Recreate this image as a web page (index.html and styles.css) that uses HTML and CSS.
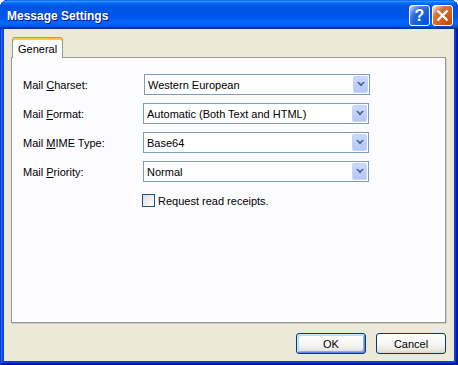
FILE: index.html
```html
<!DOCTYPE html>
<html lang="en">
<head>
    <meta charset="UTF-8">
    <title>Message Settings</title>
    <link rel="stylesheet" href="styles.css">
</head>
<body>
    <div class="window">
        <div class="titlebar">
            <span class="title">Message Settings</span>
            <div class="title-controls">
                <div class="ctl ctl-help">?</div>
                <div class="ctl ctl-close">
                    <svg width="19" height="19" viewBox="0 0 19 19">
                        <path d="M4.5 4.5 L14.5 14.5 M14.5 4.5 L4.5 14.5" stroke="#fff" stroke-width="2.4" fill="none"/>
                    </svg>
                </div>
            </div>
        </div>

        <div class="client">
            <div class="tabs">
                <div class="tab active">General</div>
            </div>

            <div class="panel">
                <div class="form">
                    <span class="label">Mail <u>C</u>harset:</span>
                    <div class="combo combo-shift">
                        <span>Western European</span>
                        <span class="combo-arrow"><svg width="8" height="5" viewBox="0 0 8 5"><polygon points="0,0 2,0 4,2 6,0 8,0 4,4.5" fill="#4d6185"/></svg></span>
                    </div>

                    <span class="label">Mail <u>F</u>ormat:</span>
                    <div class="combo">
                        <span>Automatic (Both Text and HTML)</span>
                        <span class="combo-arrow"><svg width="8" height="5" viewBox="0 0 8 5"><polygon points="0,0 2,0 4,2 6,0 8,0 4,4.5" fill="#4d6185"/></svg></span>
                    </div>

                    <span class="label">Mail <u>M</u>IME Type:</span>
                    <div class="combo">
                        <span>Base64</span>
                        <span class="combo-arrow"><svg width="8" height="5" viewBox="0 0 8 5"><polygon points="0,0 2,0 4,2 6,0 8,0 4,4.5" fill="#4d6185"/></svg></span>
                    </div>

                    <span class="label">Mail <u>P</u>riority:</span>
                    <div class="combo">
                        <span>Normal</span>
                        <span class="combo-arrow"><svg width="8" height="5" viewBox="0 0 8 5"><polygon points="0,0 2,0 4,2 6,0 8,0 4,4.5" fill="#4d6185"/></svg></span>
                    </div>
                </div>

                <label class="check">
                    <span class="box"></span>
                    <span>Request read receipts.</span>
                </label>
            </div>

            <div class="actions">
                <button class="btn btn-default">OK</button>
                <button class="btn">Cancel</button>
            </div>
        </div>
    </div>
</body>
</html>
```

FILE: styles.css
```css
* {
    margin: 0;
    padding: 0;
    box-sizing: border-box;
}

body {
    background: #fff;
    font-family: "Liberation Sans", Arial, sans-serif;
    font-size: 11px;
    color: #000;
}

.window {
    width: 458px;
    height: 365px;
    display: flex;
    flex-direction: column;
    background: #0842dc;
    border-radius: 8px 8px 0 0;
    overflow: hidden;
    box-shadow: inset -1px -1px #00138c, inset 1px 1px #0831d9,
                inset -2px -2px #001ea0, inset 2px 2px #166aee,
                inset -3px -3px #003bda, inset 3px 3px #0855dd;
}

/* title bar */
.titlebar {
    height: 29px;
    display: flex;
    align-items: center;
    padding: 0 5px 0 7px;
    border-radius: 8px 8px 0 0;
    background: linear-gradient(180deg, #0058ee 0%, #3593ff 4%, #288eff 6%, #127dff 8%,
        #036ffc 10%, #0262ee 14%, #0057e5 20%, #0054e3 24%, #0055eb 56%, #005bf5 66%,
        #026afe 76%, #0062ef 86%, #0052d6 92%, #0040ab 94%, #003092 100%);
}

.title {
    flex: 1;
    color: #fff;
    font-weight: bold;
    font-size: 12px;
    padding-top: 3px;
    text-shadow: 1px 1px #0f1089;
}

.title-controls {
    display: flex;
    gap: 2px;
    margin-top: 2px;
}

.ctl {
    width: 21px;
    height: 21px;
    border: 1px solid #fff;
    border-radius: 3px;
    display: flex;
    align-items: center;
    justify-content: center;
    color: #fff;
    font-weight: bold;
    font-size: 16px;
}

.ctl-help {
    background: radial-gradient(circle at 90% 90%, #0054e9 0%, #2263d5 55%, #4479e4 70%, #a3bbec 90%, #fff 100%);
}

.ctl-close {
    background: radial-gradient(circle at 90% 90%, #cc4600 0%, #dc6527 55%, #cd7546 70%, #ffccb2 90%, #fff 100%);
}

/* client area */
.client {
    flex: 1;
    margin: 0 4px 4px;
    background: #ece9d8;
    display: flex;
    flex-direction: column;
    padding: 8px 8px 7px 7px;
}

.tabs {
    display: flex;
    padding-left: 1px;
    margin-bottom: -1px;
    position: relative;
    z-index: 1;
}

.tab {
    height: 21px;
    padding: 2px 5px 0;
    display: flex;
    align-items: center;
    border: 1px solid #919b9c;
    border-top-color: #e68b2c;
    border-bottom: none;
    border-radius: 3px 3px 0 0;
    background: #fcfcfe;
    box-shadow: inset 0 2px #ffc73c;
}

.panel {
    flex: 1;
    background: #fcfcfe;
    border: 1px solid #919b9c;
    box-shadow: 1px 1px 0 #d0cebf;
    padding: 16px 11px 0;
}

.form {
    display: grid;
    grid-template-columns: 120px 226px;
    grid-auto-rows: 21px;
    row-gap: 8px;
    align-items: center;
}

.combo {
    height: 21px;
    border: 1px solid #7f9db9;
    background: #fff;
    display: flex;
    align-items: center;
    padding-left: 3px;
}

.combo-shift {
    margin: 0 -1px 0 1px;
}

.combo-arrow {
    margin-left: auto;
    margin-right: 1px;
    width: 15px;
    height: 17px;
    border: 1px solid #c3d3fd;
    border-radius: 2px;
    background: linear-gradient(180deg, #c9d8fd, #b4c8f6);
    display: flex;
    align-items: center;
    justify-content: center;
}

.check {
    display: flex;
    align-items: center;
    gap: 3px;
    height: 13px;
    margin: 12px 0 0 119px;
}

.box {
    width: 13px;
    height: 13px;
    border: 1px solid #1c5180;
    background: linear-gradient(135deg, #dcdcd7, #fff);
}

.actions {
    display: flex;
    justify-content: flex-end;
    gap: 10px;
    margin-top: 10px;
}

.btn {
    width: 70px;
    height: 21px;
    font-family: "Liberation Sans", Arial, sans-serif;
    font-size: 11px;
    color: #000;
    border: 1px solid #003c74;
    border-radius: 3px;
    background: linear-gradient(180deg, #fff 0%, #f4f4f0 60%, #e6e3d9 90%, #d6d0c5 100%);
}

.btn-default {
    box-shadow: inset 1px 1px #cee7ff, inset -1px -1px #6982ee,
                inset 2px 2px #bcd4f6, inset -2px -2px #89ade4;
}
```
